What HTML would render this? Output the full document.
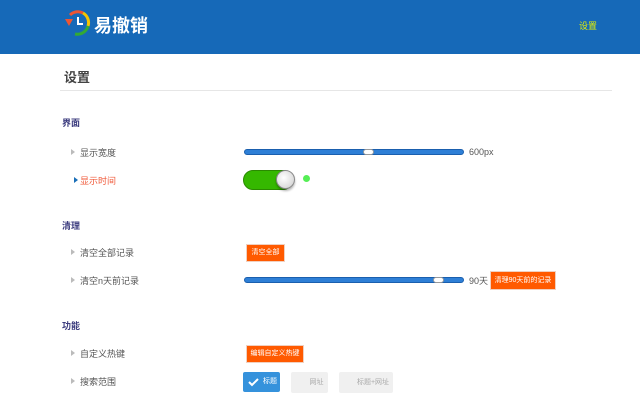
<!DOCTYPE html>
<html><head><meta charset="utf-8"><style>
*{margin:0;padding:0;box-sizing:border-box}
body{width:640px;height:400px;overflow:hidden;background:#fff;font-family:"Liberation Sans","Noto Sans CJK SC",sans-serif;position:relative;font-size:9px;color:#555}
.a{position:absolute;white-space:nowrap}
.hd{position:absolute;left:0;top:0;width:640px;height:54px;background:#1669b8}
.sec{color:#3b3b7e;font-weight:bold;font-size:9px}
.lbl{font-size:9px;color:#555}
.tri{position:absolute;width:0;height:0;border-left:4px solid #bbb;border-top:3px solid transparent;border-bottom:3px solid transparent}
.sl{position:absolute;height:6px;background:#2e7fd6;border-radius:3px;border:1px solid #1a5fae}
.kn{position:absolute;width:11px;height:6px;background:#fff;border-radius:3px;border:1px solid #999}
.btn{position:absolute;background:#ff5a00;color:#fff;font-size:7px;text-align:center;border:1px solid #f0d0c0}
.gb{position:absolute;background:#f0f0f0;color:#aaa;font-size:7px;text-align:center;border-radius:2px}
</style></head><body>
<div class="hd"></div>
<svg class="a" style="left:63px;top:9px" width="30" height="28" viewBox="0 0 30 28">
<path d="M7 6 A11 11 0 0 1 20 4" stroke="#e53" stroke-width="3" fill="none"/>
<path d="M20 4 A11 11 0 0 1 25 17" stroke="#f5c400" stroke-width="3" fill="none"/>
<path d="M25 17 A11 11 0 0 1 12 25" stroke="#3a3" stroke-width="3" fill="none"/>
<path d="M2 10 L10 10 L6 17Z" fill="#e53"/>
<path d="M15 8 V15 H20" stroke="#fff" stroke-width="2" fill="none"/>
</svg>
<div class="a" style="left:94px;top:12px;font-size:18px;font-weight:bold;color:#fff">易撤销</div>
<div class="a" style="left:579px;top:19px;font-size:9px;color:#e5f000">设置</div>
<div class="a" style="left:64px;top:67px;font-size:13px;font-weight:bold;color:#444">设置</div>
<div class="a" style="left:60px;top:90px;width:552px;height:1px;background:#e6e6e6"></div>

<div class="a sec" style="left:62px;top:116px">界面</div>
<div class="tri" style="left:71px;top:149px"></div>
<div class="a lbl" style="left:80px;top:146px">显示宽度</div>
<div class="sl" style="left:244px;top:149px;width:220px"></div>
<div class="kn" style="left:363px;top:149px"></div>
<div class="a lbl" style="left:469px;top:147px">600px</div>
<div class="tri" style="left:74px;top:177px;border-left-color:#1a6fb8"></div>
<div class="a lbl" style="left:80px;top:174px;color:#f05a3a">显示时间</div>
<div class="a" style="left:243px;top:170px;width:50px;height:20px;border-radius:10px;background:#35b800;border:1px solid #2a8a00"></div>
<div class="a" style="left:276px;top:170px;width:19px;height:19px;border-radius:50%;background:radial-gradient(circle at 40% 40%,#fff,#ccc);border:1px solid #888;box-shadow:0 2px 2px rgba(0,0,0,.3)"></div>
<div class="a" style="left:303px;top:175px;width:7px;height:7px;border-radius:50%;background:#5e5"></div>

<div class="a sec" style="left:62px;top:219px">清理</div>
<div class="tri" style="left:71px;top:249px"></div>
<div class="a lbl" style="left:80px;top:246px">清空全部记录</div>
<div class="btn" style="left:246px;top:244px;width:39px;height:18px;line-height:16px">清空全部</div>
<div class="tri" style="left:71px;top:277px"></div>
<div class="a lbl" style="left:80px;top:274px">清空n天前记录</div>
<div class="sl" style="left:244px;top:277px;width:220px"></div>
<div class="kn" style="left:433px;top:277px"></div>
<div class="a lbl" style="left:469px;top:274px">90天</div>
<div class="btn" style="left:490px;top:271px;width:66px;height:19px;line-height:17px">清理90天前的记录</div>

<div class="a sec" style="left:62px;top:319px">功能</div>
<div class="tri" style="left:71px;top:350px"></div>
<div class="a lbl" style="left:80px;top:347px">自定义热键</div>
<div class="btn" style="left:246px;top:345px;width:58px;height:18px;line-height:16px">编辑自定义热键</div>
<div class="tri" style="left:71px;top:378px"></div>
<div class="a lbl" style="left:80px;top:375px">搜索范围</div>
<div class="a" style="left:243px;top:372px;width:37px;height:20px;background:#3592dc;border-radius:2px;color:#fff;font-size:7px;line-height:20px;padding-left:20px">标题</div>
<svg class="a" style="left:248px;top:377px" width="11" height="10"><path d="M1 5 L4 8 L10 2" stroke="#fff" stroke-width="2" fill="none"/></svg>
<div class="gb" style="left:291px;top:372px;width:37px;height:21px;line-height:21px;padding-left:14px">网址</div>
<div class="gb" style="left:339px;top:372px;width:54px;height:21px;line-height:21px;padding-left:14px">标题+网址</div>
</body></html>
